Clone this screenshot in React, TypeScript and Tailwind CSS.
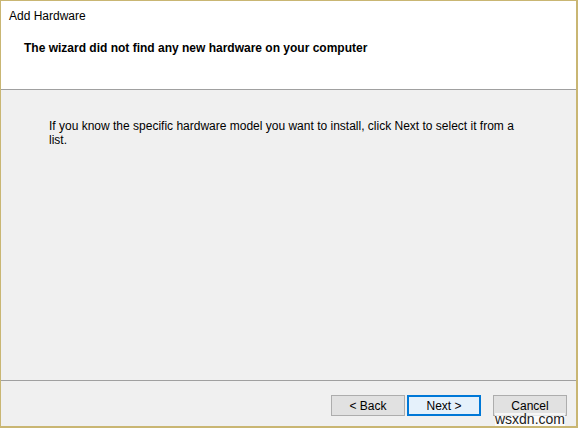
import React from 'react';

const WizardButton = ({ label, primary }: { label: string; primary?: boolean }) => (
  <button
    className={
      primary
        ? 'block w-[74px] h-[21px] bg-[#e5f1fb] border-2 border-[#0078d7] text-[12px] leading-none text-black'
        : 'block w-[74px] h-[21px] bg-[#e1e1e1] border border-[#adadad] text-[12px] leading-none text-black'
    }>
    {label}
  </button>
);

export default function App() {
  return (
    <div
      className="relative w-[578px] h-[428px] flex flex-col bg-[#f0f0f0] border-t border-l border-r-2 border-b-2 border-[#c9b673] text-black"
      style={{ fontFamily: '"Liberation Sans", Arial, sans-serif' }}>
      <div className="h-[89px] bg-white border-b border-[#a0a0a0] flex flex-col">
        <div className="pl-[8px] pt-[8px] text-[12px] leading-[15px]">Add Hardware</div>
        <div className="pl-[23px] pt-[17px] text-[12px] leading-[15px] font-bold">
          The wizard did not find any new hardware on your computer
        </div>
      </div>

      <div className="flex-1 pl-[48px] pr-[50px] pt-[29px] text-[12px] leading-[14px]">
        If you know the specific hardware model you want to install, click Next to select it from a
        list.
      </div>

      <div className="h-[46px] border-t border-[#a0a0a0] flex items-start justify-end pt-[14px] pr-[9px] gap-[2px]">
        <WizardButton label="< Back" />
        <WizardButton label="Next >" primary />
        <div className="ml-[10px]">
          <WizardButton label="Cancel" />
        </div>
      </div>

      <div className="absolute right-[11px] bottom-0 bg-white/70 text-[14px] leading-[13px] text-[#222]">
        wsxdn.com
      </div>
    </div>
  );
}
